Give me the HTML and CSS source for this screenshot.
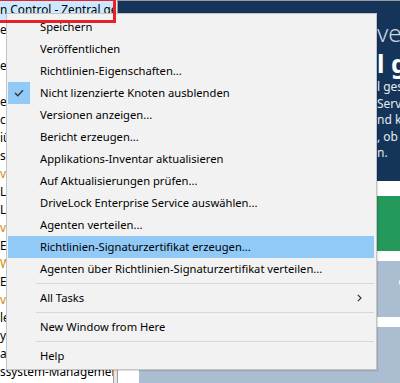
FILE: index.html
```html
<!DOCTYPE html>
<html lang="de">
<head>
  <meta charset="UTF-8" />
  <meta name="viewport" content="width=device-width, initial-scale=1.0" />
  <title>DriveLock Management Console</title>
  <link rel="stylesheet" href="styles.css">
</head>
<body>
  <div class="console">
    <div class="tree">
      <div class="tree-row selected">n Control - Zentral gesteuerte Richtlinie</div>
      <div class="tree-row">e</div>
      <div class="tree-row"></div>
      <div class="tree-row">er</div>
      <div class="tree-row"></div>
      <div class="tree-row">er</div>
      <div class="tree-row">c</div>
      <div class="tree-row">iü</div>
      <div class="tree-row">s</div>
      <div class="tree-row orange">v</div>
      <div class="tree-row">L</div>
      <div class="tree-row">L</div>
      <div class="tree-row orange">v</div>
      <div class="tree-row">E</div>
      <div class="tree-row orange">W</div>
      <div class="tree-row">E</div>
      <div class="tree-row orange">v</div>
      <div class="tree-row">le</div>
      <div class="tree-row">y</div>
      <div class="tree-row">a</div>
      <div class="tree-row">ssystem-Management</div>
    </div>

    <div class="splitter"></div>

    <div class="content">
      <div class="hero">
        <div class="hero-logo">ve<span class="logo-box"></span></div>
        <div class="hero-title">l g</div>
        <div class="hero-text">
          <p>l ges</p>
          <p>Servi</p>
          <p>nd ke</p>
          <p>, ob</p>
          <p>n.</p>
        </div>
      </div>
      <div class="tiles">
        <div class="tile-green"></div>
        <div class="tile-grey"><span class="tile-label">e</span></div>
        <div class="tile-grey"></div>
      </div>
    </div>
  </div>

  <div class="red-mark"></div>

  <div class="context-menu">
    <div class="menu-item">Speichern</div>
    <div class="menu-item">Veröffentlichen</div>
    <div class="menu-item">Richtlinien-Eigenschaften...</div>
    <div class="menu-item checked">
      <span class="check">
        <svg width="10" height="8" viewBox="0 0 10 8"><path d="M1 4 L3.8 6.8 L9 1.2" fill="none" stroke="#333" stroke-width="1.4"/></svg>
      </span>
      Nicht lizenzierte Knoten ausblenden
    </div>
    <div class="menu-item">Versionen anzeigen...</div>
    <div class="menu-item">Bericht erzeugen...</div>
    <div class="menu-item">Applikations-Inventar aktualisieren</div>
    <div class="menu-item">Auf Aktualisierungen prüfen...</div>
    <div class="menu-item">DriveLock Enterprise Service auswählen...</div>
    <div class="menu-item">Agenten verteilen...</div>
    <div class="menu-item active">Richtlinien-Signaturzertifikat erzeugen...</div>
    <div class="menu-item">Agenten über Richtlinien-Signaturzertifikat verteilen...</div>
    <div class="menu-sep"></div>
    <div class="menu-item submenu">
      All Tasks
      <svg class="arrow" width="5" height="8" viewBox="0 0 5 8"><path d="M0.8 0.8 L4 4 L0.8 7.2" fill="none" stroke="#333" stroke-width="1.2"/></svg>
    </div>
    <div class="menu-sep"></div>
    <div class="menu-item">New Window from Here</div>
    <div class="menu-sep"></div>
    <div class="menu-item">Help</div>
  </div>
</body>
</html>
```

FILE: styles.css
```css
:root {
  --navy: #15345a;
  --menu-bg: #f2f2f2;
  --menu-border: #c4c4c4;
  --hover: #91c9f7;
  --sep: #d7d7d7;
  --green: #23985a;
  --slate: #abbdd0;
  --red: #e8202a;
}

* {
  margin: 0;
  padding: 0;
  box-sizing: border-box;
}

body {
  width: 400px;
  height: 383px;
  overflow: hidden;
  position: relative;
  background: #ffffff;
  font-family: 'Noto Sans', 'Open Sans', sans-serif;
  font-size: 12px;
  color: #000;
}

.console {
  display: grid;
  grid-template-columns: 113px 5px 1fr;
  height: 383px;
}

/* left tree pane */
.tree {
  background: #fff;
  overflow: hidden;
  white-space: nowrap;
  padding-top: 1px;
}

.tree-row {
  height: 18px;
  line-height: 18px;
  font-size: 11.8px;
}

.tree-row.selected {
  height: 19px;
  line-height: 16px;
  background: #cce8ff;
}

.tree-row.orange {
  color: #c98a12;
}

.splitter {
  background: #e6e6e6;
  border-left: 1px solid #a0a0a0;
  border-right: 1px solid #a0a0a0;
}

/* right content pane */
.content {
  display: flex;
  flex-direction: column;
  background: #fff;
  border-top: 1px solid #9a9a9a;
}

.hero {
  height: 180px;
  background: var(--navy);
  color: #fff;
  padding-left: 259px;
  padding-top: 19px;
  overflow: hidden;
  white-space: nowrap;
}

.hero-logo {
  display: flex;
  align-items: center;
  font-size: 24px;
  font-weight: 300;
  color: #cfd6df;
  height: 26px;
  line-height: 26px;
}

.logo-box {
  display: inline-block;
  width: 10px;
  height: 16px;
  background: #fff;
  margin-left: 2px;
}

.hero-title {
  font-size: 25px;
  font-weight: 700;
  line-height: 30px;
  margin-top: 2px;
}

.hero-text {
  font-size: 12px;
  line-height: 16.5px;
  color: #e6ebf1;
  margin-top: 1px;
}

.tiles {
  flex: 1;
  display: flex;
  flex-direction: column;
  gap: 10px;
  padding: 15px 0 0 21px;
}

.tile-green {
  height: 55px;
  background: var(--green);
}

.tile-grey {
  height: 56px;
  background: var(--slate);
  padding-left: 261px;
  color: #fff;
}

.tile-grey:last-child {
  flex: 1;
}

.tile-label {
  display: inline-block;
  margin-top: 12px;
  transform: rotate(90deg);
  font-size: 13px;
}

/* annotation frame */
.red-mark {
  position: absolute;
  left: -4px;
  top: -2px;
  width: 120px;
  height: 25px;
  border: 3px solid var(--red);
  z-index: 3;
}

/* context menu */
.context-menu {
  position: absolute;
  left: 6px;
  top: 13px;
  width: 371px;
  background: var(--menu-bg);
  border: 1px solid var(--menu-border);
  padding: 2px 2px 2px 1px;
  box-shadow: 1px 1px 1px rgba(0, 0, 0, 0.12);
  font-size: 11.2px;
  z-index: 2;
}

.menu-item {
  position: relative;
  height: 22px;
  line-height: 22px;
  padding-left: 32px;
  white-space: nowrap;
}

.menu-item.active {
  background: var(--hover);
}

.check {
  position: absolute;
  left: 0;
  top: 0;
  width: 22px;
  height: 22px;
  background: var(--hover);
  display: flex;
  align-items: center;
  justify-content: center;
}

.arrow {
  position: absolute;
  right: 12px;
  top: 7px;
}

.menu-sep {
  height: 7px;
  margin-left: 28px;
  display: flex;
  align-items: center;
}

.menu-sep::after {
  content: "";
  flex: 1;
  height: 1px;
  background: var(--sep);
}
```
